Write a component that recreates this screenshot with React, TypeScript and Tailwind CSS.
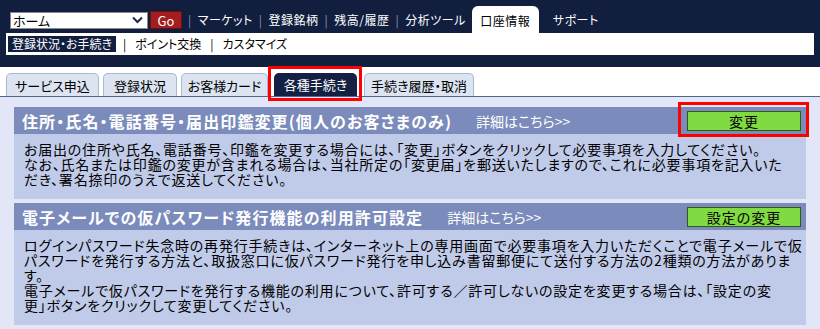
import React from "react";

const topLinks = ["マーケット", "登録銘柄", "残高/履歴", "分析ツール"];
const subLinks = ["ポイント交換", "カスタマイズ"];
const tabs = [
  { label: "サービス申込", w: "w-[93px]" },
  { label: "登録状況", w: "w-[74px]" },
  { label: "お客様カード", w: "w-[87px]" },
  { label: "各種手続き", w: "w-[83px]", active: true },
  { label: "手続き履歴・取消", w: "w-[110px]" },
];

const sections = [
  {
    title: "住所・氏名・電話番号・届出印鑑変更(個人のお客さまのみ)",
    button: "変更",
    highlight: true,
    lines: [
      "お届出の住所や氏名、電話番号、印鑑を変更する場合には、「変更」ボタンをクリックして必要事項を入力してください。",
      "なお、氏名または印鑑の変更が含まれる場合は、当社所定の「変更届」を郵送いたしますので、これに必要事項を記入いた",
      "だき、署名捺印のうえで返送してください。",
    ],
  },
  {
    title: "電子メールでの仮パスワード発行機能の利用許可設定",
    button: "設定の変更",
    highlight: false,
    lines: [
      "ログインパスワード失念時の再発行手続きは、インターネット上の専用画面で必要事項を入力いただくことで電子メールで仮",
      "パスワードを発行する方法と、取扱窓口に仮パスワード発行を申し込み書留郵便にて送付する方法の2種類の方法がありま",
      "す。",
      "電子メールで仮パスワードを発行する機能の利用について、許可する／許可しないの設定を変更する場合は、「設定の変",
      "更」ボタンをクリックして変更してください。",
    ],
  },
];

const Sep = () => <span className="text-[#8593b5] px-[6px]">|</span>;

export default function App() {
  return (
    <div
      className="w-[820px] h-[329px] overflow-hidden bg-[#e3e6f7] text-[13px] text-black [font-feature-settings:'palt']"
      style={{ fontFamily: '"Noto Sans CJK JP", "Noto Sans", sans-serif' }}
    >
      {/* header */}
      <div className="bg-[#111e3e] h-[67px] flex flex-col text-[12px]">
        <div className="flex items-start pl-[10px] pt-[6px] h-[33px]">
          <div className="mt-[5px] flex items-center">
            <div className="w-[138px] h-[17px] bg-white border border-[#8a8a8a] flex items-center justify-between pl-[2px] pr-[4px] leading-none text-[13px]">
              <span>ホーム</span>
              <svg width="11" height="8" viewBox="0 0 11 8">
                <path d="M1 1.5 L5.5 6 L10 1.5" fill="none" stroke="#1c2a4a" strokeWidth="2" />
              </svg>
            </div>
            <div className="ml-[2px] w-[32px] h-[18px] bg-[#a31e1e] border border-[#6c0f0f] text-white flex items-center justify-center leading-none text-[13px]">
              Go
            </div>
          </div>
          <div className="flex items-center h-[28px] text-white leading-none tracking-[0.5px]">
            {topLinks.map((l) => (
              <React.Fragment key={l}>
                <Sep />
                <span>{l}</span>
              </React.Fragment>
            ))}
          </div>
          <div className="ml-[6px] w-[67px] h-[33px] bg-white rounded-t-[6px] flex items-center justify-center leading-none pb-[4px] tracking-[0.5px]">
            口座情報
          </div>
          <div className="ml-[14px] h-[28px] flex items-center text-white leading-none tracking-[0.5px]">サポート</div>
        </div>
        <div className="mx-[6px] h-[22px] bg-white flex items-center pl-[2px] leading-none">
          <span className="bg-[#111e3e] text-white h-[16px] px-[4px] flex items-center">登録状況・お手続き</span>
          {subLinks.map((l) => (
            <React.Fragment key={l}>
              <span className="px-[7px]">|</span>
              <span className="px-[2px]">{l}</span>
            </React.Fragment>
          ))}
        </div>
      </div>

      {/* tabs */}
      <div className="relative bg-white h-[30px] pt-[6px] pl-[6px] border-b border-[#4d6790] flex items-end gap-[4px]">
        {tabs.map((t) =>
          t.active ? (
            <div
              key={t.label}
              className={`${t.w} h-[23px] ml-[2px] mr-[3px] rounded-t-[5px] bg-[#132043] text-white flex items-center justify-center leading-none`}
            >
              {t.label}
            </div>
          ) : (
            <div
              key={t.label}
              className={`${t.w} h-[23px] rounded-t-[5px] bg-[#dce4f2] border border-b-0 border-[#a9b9d4] flex items-center justify-center leading-none`}
            >
              {t.label}
            </div>
          )
        )}
        <div className="absolute left-[268px] top-[-1px] w-[94px] h-[35px] border-[3px] border-[#f00] pointer-events-none" />
      </div>

      {/* content */}
      <div className="px-[14px] pt-[10px] flex flex-col gap-[4px]">
        {sections.map((s) => (
          <div key={s.title} className="w-[792px]">
            <div className="relative h-[27px] bg-[#7b8bbb] flex items-center text-white leading-none">
              <span className="pl-[8px] text-[16px] font-bold tracking-[1.1px]">{s.title}</span>
              <span className="ml-[24px] text-[14px]">詳細はこちら&gt;&gt;</span>
              <div className="ml-auto mr-[5px] w-[114px] h-[20px] bg-[#80da42] border border-[#2f5a17] text-black text-[14px] flex items-center justify-center tracking-[1px]">
                {s.button}
              </div>
              {s.highlight && (
                <div className="absolute right-[-3px] top-[-5px] w-[131px] h-[35px] border-[3px] border-[#f00] pointer-events-none" />
              )}
            </div>
            <div className="bg-[#c0cbe9] px-[10px] pt-[8px] pb-[12px] text-[14px] leading-[15px] tracking-[0.8px] whitespace-nowrap">
              {s.lines.map((l, i) => (
                <div key={i}>{l}</div>
              ))}
            </div>
          </div>
        ))}
      </div>
    </div>
  );
}
